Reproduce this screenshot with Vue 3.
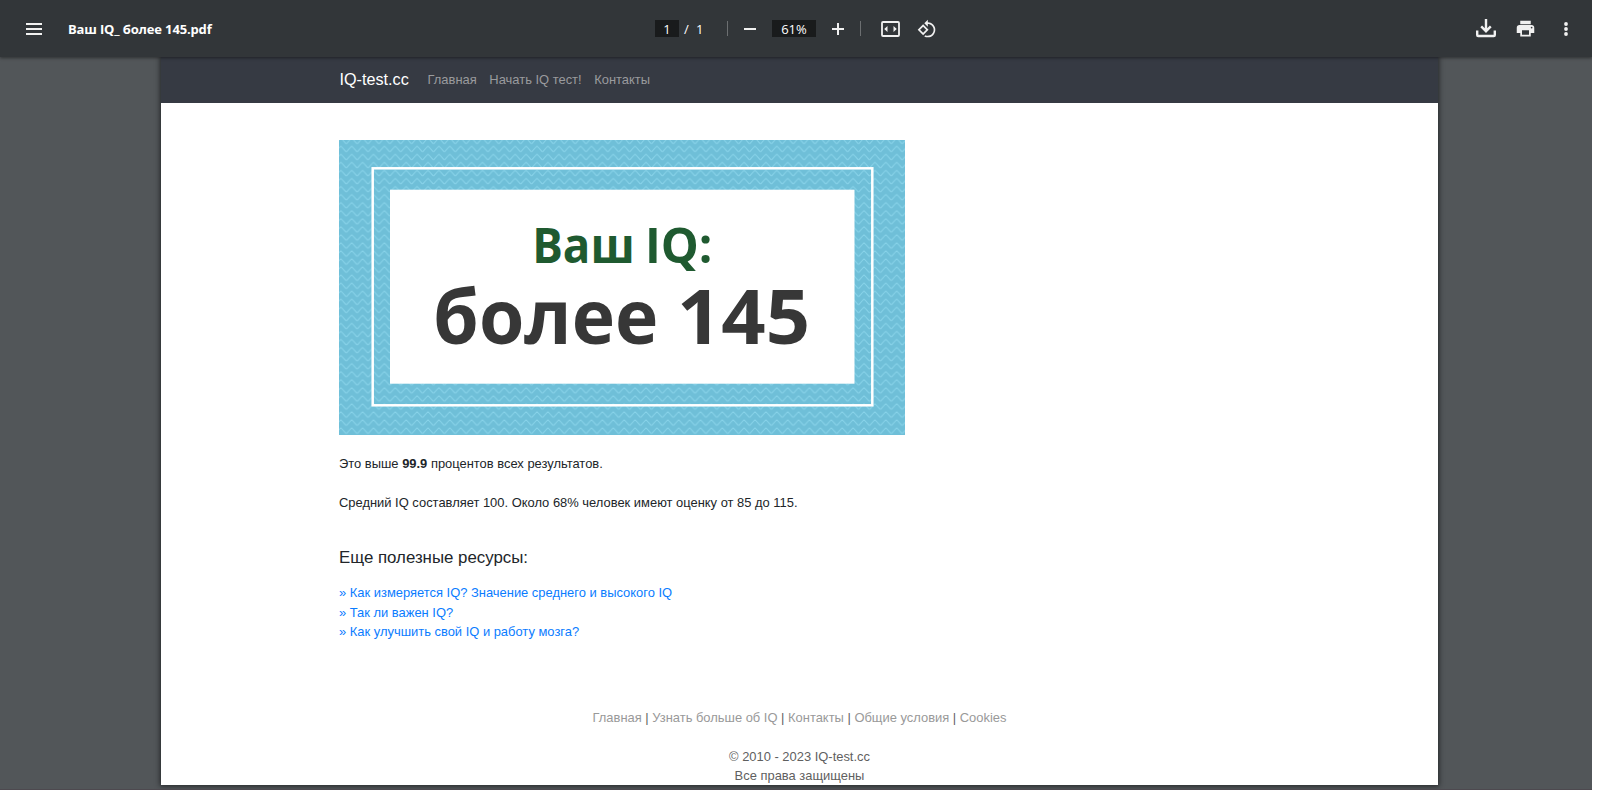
<template>
  <div class="screen">
    <div class="viewer">
      <header class="toolbar">
        <svg class="icon menu" width="16" height="12" viewBox="0 0 16 12">
          <path d="M0 0h16v2H0zM0 5h16v2H0zM0 10h16v2H0z" />
        </svg>
        <span class="title">{{ title }}</span>

        <div class="controls">
          <span class="field page-field">1</span>
          <span class="slash">/</span>
          <span class="total">1</span>
          <i class="separator"></i>
          <svg class="icon minus" width="12" height="12" viewBox="0 0 12 12">
            <path d="M0 5h12v2H0z" />
          </svg>
          <span class="field zoom-field">61%</span>
          <svg class="icon plus" width="12" height="12" viewBox="0 0 12 12">
            <path d="M5 0h2v5h5v2H7v5H5V7H0V5h5z" />
          </svg>
          <i class="separator second"></i>
          <svg class="icon fit" width="19" height="16" viewBox="0 0 19 16">
            <rect x="1" y="1" width="17" height="14" rx="1" fill="none" stroke="#f1f1f1" stroke-width="1.8" />
            <path d="M6.500 5v6L3.200 8zM12.500 5v6l3.300-3z" />
          </svg>
          <svg class="icon rotate" width="20" height="20" viewBox="0 0 24 24">
            <path
              d="M7.34 6.41L.86 12.9l6.49 6.48 6.49-6.48-6.5-6.49zM3.69 12.9l3.66-3.66L11 12.9l-3.66 3.66-3.65-3.66zm15.67-6.26C17.61 4.88 15.3 4 13 4V.76L8.76 5 13 9.24V6c1.79 0 3.58.68 4.95 2.05 2.73 2.73 2.73 7.17 0 9.9C16.58 19.32 14.79 20 13 20c-.97 0-1.94-.21-2.84-.61l-1.49 1.49C10.02 21.62 11.51 22 13 22c2.3 0 4.61-.88 6.36-2.64 3.52-3.51 3.52-9.21 0-12.72z"
            />
          </svg>
        </div>

        <div class="actions">
          <svg class="icon download" width="20" height="19" viewBox="0 0 20 19">
            <path
              d="M1.200 11.500V16a1 1 0 0 0 1 1h15.600a1 1 0 0 0 1-1v-4.500M10 0v12M5.200 7.400L10 12.200l4.800-4.800"
              fill="none"
              stroke="#f1f1f1"
              stroke-width="2.400"
            />
          </svg>
          <svg class="icon print" width="21" height="21" viewBox="0 0 24 24">
            <path
              d="M19 8H5c-1.660 0-3 1.340-3 3v6h4v4h12v-4h4v-6c0-1.660-1.340-3-3-3zm-3 11H8v-5h8v5zm3-7c-.55 0-1-.45-1-1s.45-1 1-1 1 .45 1 1-.45 1-1 1zm-1-9H6v4h12V3z"
            />
          </svg>
          <svg class="icon dots" width="4" height="14" viewBox="0 0 4 14">
            <circle cx="2" cy="2" r="1.900" />
            <circle cx="2" cy="7" r="1.900" />
            <circle cx="2" cy="12" r="1.900" />
          </svg>
        </div>
      </header>

      <main class="page">
        <nav class="navbar">
          <a class="brand">IQ-test.cc</a>
          <a v-for="item in navLinks" :key="item" class="nav-link">{{ item }}</a>
        </nav>

        <section class="content">
          <svg class="certificate" width="566" height="295" viewBox="0 0 566 295">
            <defs>
              <pattern id="waves" x="1.800" y="5.500" width="10.900" height="8.050" patternUnits="userSpaceOnUse">
                <path
                  d="M-1 1.800L0 1Q.6 1 1.200 1.800L4.700 5.600Q5.450 6.400 6.200 5.600L9.700 1.800Q10.300 1 10.900 1l1 .8"
                  fill="none"
                  stroke="#8ad4ea"
                  stroke-width="1"
                />
              </pattern>
            </defs>
            <rect width="566" height="295" fill="#6fbfd8" />
            <rect width="566" height="295" fill="url(#waves)" />
            <rect x="33.700" y="28.300" width="499.600" height="237" fill="none" stroke="#fff" stroke-width="2.500" />
            <rect x="51" y="49.700" width="464.500" height="194" fill="#fff" />
            <text class="cert-label" y="122.500">
              <tspan x="193.200" textLength="102.500" lengthAdjust="spacingAndGlyphs">Ваш</tspan>
              <tspan x="306" textLength="67.500" lengthAdjust="spacingAndGlyphs">IQ:</tspan>
            </text>
            <text class="cert-score" y="204">
              <tspan x="94.300" textLength="225" lengthAdjust="spacingAndGlyphs">более</tspan>
              <tspan x="338" textLength="133" lengthAdjust="spacingAndGlyphs">145</tspan>
            </text>
          </svg>

          <p>Это выше <b>99.9</b> процентов всех результатов.</p>
          <p>Средний IQ составляет 100. Около 68% человек имеют оценку от 85 до 115.</p>

          <h5>Еще полезные ресурсы:</h5>
          <ul class="resources">
            <li v-for="item in resources" :key="item">
              <a>» {{ item }}</a>
            </li>
          </ul>
        </section>

        <footer class="footer">
          <div>
            <template v-for="(item, i) in footerLinks" :key="item">
              <span v-if="i"> | </span><a>{{ item }}</a>
            </template>
          </div>
          <div class="copyright">© 2010 - 2023 IQ-test.cc<br />Все права защищены</div>
        </footer>
      </main>
    </div>
  </div>
</template>

<script setup>
const title = "Ваш IQ_ более 145.pdf";

const navLinks = ["Главная", "Начать IQ тест!", "Контакты"];

const resources = [
  "Как измеряется IQ? Значение среднего и высокого IQ",
  "Так ли важен IQ?",
  "Как улучшить свой IQ и работу мозга?",
];

const footerLinks = ["Главная", "Узнать больше об IQ", "Контакты", "Общие условия", "Cookies"];
</script>

<style>
body {
  margin: 0;
  background: #fff;
}
</style>

<style scoped>
* {
  box-sizing: border-box;
}

.screen {
  height: 790px;
  overflow: hidden;
  background: #fff;
}

.viewer {
  width: 1592px;
  height: 790px;
  overflow: hidden;
  background: #525659;
  border-bottom: 1px solid #4d494f;
}

/* Toolbar */
.toolbar {
  position: relative;
  z-index: 1;
  display: flex;
  align-items: center;
  height: 57px;
  background: #323639;
  box-shadow: 0 1px 3px rgba(0, 0, 0, 0.45);
  color: #fff;
  font-family: "Open Sans", "Noto Sans", sans-serif;
  font-size: 13px;
}

.icon {
  display: block;
  flex: none;
  fill: #f1f1f1;
}

.menu {
  margin-left: 26px;
}

.title {
  width: 587px;
  margin-left: 26px;
  font-size: 13px;
  font-weight: 700;
  letter-spacing: -0.15px;
  line-height: 18px;
  white-space: nowrap;
}

.controls {
  display: flex;
  align-items: center;
}

.field {
  height: 17px;
  background: #191b1c;
  line-height: 18px;
  text-align: center;
}

.page-field {
  width: 24px;
}

.slash {
  width: 14px;
  margin-left: 5px;
}

.total {
  width: 28px;
  margin-left: -2px;
}

.total,
.slash {
  line-height: 18px;
}

.separator {
  width: 1px;
  height: 15px;
  margin-left: 3px;
  background: #6c6f71;
}

.minus {
  margin-left: 16px;
}

.zoom-field {
  width: 44px;
  margin-left: 16px;
}

.plus {
  margin-left: 16px;
}

.separator.second {
  margin-left: 16px;
}

.fit {
  margin-left: 20px;
}

.rotate {
  margin-left: 17px;
}

.actions {
  display: flex;
  align-items: center;
  margin-left: auto;
  margin-right: 24px;
}

.print {
  margin-left: 19px;
}

.dots {
  margin-left: 28px;
}

/* Document page */
.page {
  width: 1277px;
  height: 728px;
  margin-left: 161px;
  background: #fff;
  box-shadow: 0 0 5px 1px rgba(20, 22, 24, 0.75);
  color: #212529;
  font-family: "Liberation Sans", Arial, sans-serif;
  font-size: 12.93px;
  line-height: 19.5px;
}

.navbar {
  display: flex;
  align-items: center;
  height: 46px;
  padding: 0 0 1px 178.5px;
  background: #363a43;
}

.brand {
  margin-right: 12.5px;
  color: #fff;
  font-size: 16.2px;
}

.nav-link {
  padding: 0 6.3px;
  color: #9a9b9e;
}

.content {
  padding: 37px 0 0 178px;
}

.certificate {
  display: block;
  margin-bottom: 19px;
}

.cert-label,
.cert-score {
  font-family: "Open Sans", "Noto Sans", sans-serif;
  font-weight: 700;
}

.cert-label {
  fill: #1f5a30;
  font-size: 49px;
}

.cert-score {
  fill: #373737;
  font-size: 75px;
}

p {
  margin: 0 0 19.5px;
}

h5 {
  margin: 35px 0 16px;
  font-size: 16.85px;
  font-weight: 400;
  line-height: 19.5px;
}

.resources {
  margin: 0;
  padding: 0;
  list-style: none;
}

.resources a {
  color: #0a7cff;
}

.footer {
  margin-top: 66px;
  color: #5f5f5f;
  text-align: center;
}

.footer a {
  color: #999;
}

.copyright {
  margin-top: 19.5px;
}
</style>
